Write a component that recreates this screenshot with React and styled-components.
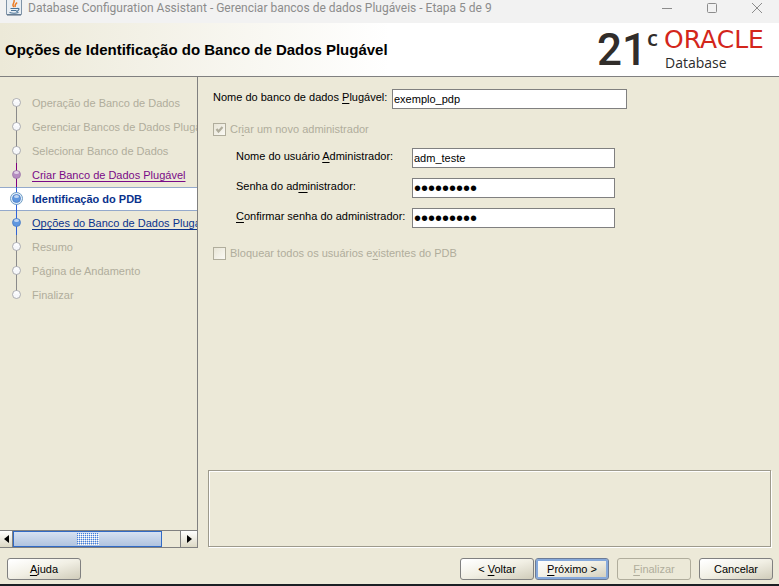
import React from "react";
import styled, { createGlobalStyle, css } from "styled-components";

const GlobalStyle = createGlobalStyle`
  *, *::before, *::after { box-sizing: border-box; }
  body {
    margin: 0;
    background: #ece9d8;
    color: #000;
    font: 11px/14px "Liberation Sans", Arial, sans-serif;
  }
  button, input { font: inherit; color: inherit; }
`;

const Window = styled.div`
  display: flex;
  flex-direction: column;
  min-height: 100vh;
  background: #ece9d8;
  border-bottom: 2px solid #1b1f24;
`;

const TitleBar = styled.div`
  display: flex;
  align-items: flex-start;
  height: 23px;
  padding-left: 6px;
  background: #f2f2f2;
  color: #8c8c8c;
`;

const WindowTitle = styled.span`
  flex: 1;
  padding-left: 6px;
  font: 12px/16px Roboto, "Noto Sans", sans-serif;
  white-space: nowrap;
`;

const WindowButton = styled.button`
  width: 45px;
  height: 16px;
  padding: 0;
  border: 0;
  background: none;
  svg { display: block; margin: 0 auto; }
`;

const Header = styled.header`
  display: flex;
  align-items: center;
  justify-content: space-between;
  height: 54px;
  padding: 0 11px 0 5px;
  border-bottom: 1px solid #808080;
  background: linear-gradient(to right, #ece9d8 0, #fff 50%);
`;

const PageTitle = styled.h1`
  margin: 0;
  font-size: 15px;
  line-height: 18px;
  font-weight: bold;
`;

const Brand = styled.div`
  display: flex;
  align-items: flex-start;
  gap: 6px;
  height: 46px;
`;

const Release = styled.span`
  display: flex;
  color: #312d2a;
  font: 500 44px/46px Roboto, sans-serif;
`;

const ReleaseSuffix = styled.sup`
  font: 600 22px/20px "Open Sans", sans-serif;
`;

const BrandNames = styled.span`
  display: flex;
  flex-direction: column;
  width: 104px;
`;

const Maker = styled.span`
  color: #d3261b;
  font: 25px/26px "DejaVu Sans", sans-serif;
`;

const Product = styled.span`
  padding-left: 1px;
  color: #2b2b2b;
  font: 14px/20px "Open Sans", sans-serif;
`;

const Body = styled.div`
  display: flex;
  flex: 1;
`;

const Sidebar = styled.nav`
  display: flex;
  flex-direction: column;
  flex: none;
  width: 198px;
  border-right: 1px solid #808080;
`;

const StepList = styled.ol`
  flex: 1;
  margin: 0;
  padding: 14px 0 0;
  list-style: none;
  overflow: hidden;
`;

const stepColors = { done: "#b0ad9c", visited: "#7a0a87", current: "#0a328c", next: "#0a328c", todo: "#b0ad9c" };

const Step = styled.li`
  display: flex;
  align-items: center;
  height: 24px;
  padding-left: 8px;
  color: ${(p) => stepColors[p.$state]};
  white-space: nowrap;
  ${(p) =>
    p.$state === "current" &&
    css`
      background: #fff;
      font-weight: bold;
      box-shadow: inset 0 1px #94a9cb, inset 0 -1px #94a9cb;
    `}
  svg { flex: none; margin-right: 8px; }
  a { color: inherit; text-underline-offset: 2px; }
`;

const ScrollBar = styled.div`
  display: flex;
  height: 18px;
  border: solid #808080;
  border-width: 1px 0;
`;

const ScrollArrow = styled.button`
  flex: none;
  width: ${(p) => p.$width}px;
  padding: 0;
  border: 0;
  border-${(p) => p.$side}: 1px solid #808080;
  background: linear-gradient(#fff, #dcd8c4);
  svg { display: block; margin: 0 auto; }
`;

const ScrollTrack = styled.div`
  flex: 1;
  padding-right: 18px;
`;

const ScrollThumb = styled.div`
  display: flex;
  align-items: center;
  justify-content: center;
  height: 16px;
  border: 1px solid #316ac5;
  background: linear-gradient(#d6e1f2, #b0c3df);
`;

const Main = styled.main`
  display: flex;
  flex: 1;
  flex-direction: column;
  min-width: 0;
  padding: 12px 8px 1px 10px;
`;

const Form = styled.form`
  flex: 1;
  padding-left: 5px;
`;

const NameField = styled.div`
  display: grid;
  grid-template-columns: 179px minmax(0, 235px);
`;

const AdminFields = styled.div`
  display: grid;
  grid-template-columns: 176px minmax(0, 203px);
  row-gap: 10px;
  padding: 9px 0 15px 23px;
`;

const FieldLabel = styled.label`
  padding-top: 1px;
  white-space: nowrap;
`;

const TextField = styled.input`
  width: 100%;
  min-width: 0;
  height: 20px;
  padding: 1px;
  border: 1px solid #808080;
  border-radius: 0;
  outline: 0;
  background: #fff;
  &[type="password"] { font-size: 20px; }
`;

const CheckRow = styled.div`
  display: flex;
  align-items: center;
  height: 20px;
  gap: 4px;
  color: #b0ad9c;
`;

const FirstCheckRow = styled(CheckRow)`
  margin-top: 10px;
`;

const CheckSlot = styled.span`
  display: grid;
  width: 13px;
  height: 13px;
  > * { grid-area: 1 / 1; }
`;

const CheckBox = styled.input`
  appearance: none;
  width: 13px;
  height: 13px;
  margin: 0;
  border: 1px solid #b0ad9c;
  background: linear-gradient(135deg, #e8e5d6, #faf9f4);
`;

const MessageBox = styled.section`
  height: 77px;
  border: 1px solid #9d9a8c;
  box-shadow: 1px 1px #fff, inset 1px 1px #fff;
`;

const Footer = styled.footer`
  display: flex;
  align-items: flex-start;
  justify-content: space-between;
  height: 36px;
  padding: 10px 6px 0 7px;
`;

const ButtonGroup = styled.div`
  display: flex;
  gap: 8px;
`;

const ButtonPair = styled.div`
  display: flex;
  gap: 1px;
`;

const Button = styled.button`
  width: 74px;
  height: 22px;
  padding: 0;
  border: 1px solid #808080;
  border-radius: 3px;
  background: linear-gradient(165deg, #fff 5%, #f1efe4 50%, #d0ccba);
  ${(p) =>
    p.$primary &&
    css`
      border-color: #6c7b96;
      box-shadow: inset 0 0 0 2px #86a9db;
    `}
  &:disabled {
    border-color: #b0ad9c;
    background: none;
    color: #b0ad9c;
  }
`;

const Key = styled.u`
  text-underline-offset: 2px;
`;

const steps = [
  ["Operação de Banco de Dados", "done"],
  ["Gerenciar Bancos de Dados Plugáveis", "done"],
  ["Selecionar Banco de Dados", "done"],
  ["Criar Banco de Dados Plugável", "visited"],
  ["Identificação do PDB", "current"],
  ["Opções do Banco de Dados Plugável", "next"],
  ["Resumo", "todo"],
  ["Página de Andamento", "todo"],
  ["Finalizar", "todo"],
];

const markerColors = {
  done: ["#f6f7fa", "#9a9ca2", "#8a8a8a"],
  todo: ["#f6f7fa", "#9a9ca2", "#8a8a8a"],
  visited: ["#b58cc0", "#9c78a8", "#800080"],
  current: ["#5f97e0", "#4b7cc4", "#2f62d9"],
  next: ["#5f97e0", "#4b7cc4", "#2f62d9"],
};

function StepMarker({ state, first, last }) {
  const [fill, edge, line] = markerColors[state];
  return (
    <svg width="16" height="24" viewBox="0 0 16 24" aria-hidden="true">
      {!first && <path d="M8.500 0V8" stroke={line} />}
      {!last && <path d="M8.500 15V24" stroke={line} />}
      {state === "current" && <circle cx="8.500" cy="11.500" r="6" fill="#e4f0fb" stroke="#6f9cc4" />}
      <circle cx="8.500" cy="11.500" r="4" fill={fill} stroke={edge} strokeWidth="0.800" />
      <ellipse cx="8.500" cy="9.500" rx="2.500" ry="1.500" fill="#fff" opacity="0.600" />
    </svg>
  );
}

function JavaIcon() {
  return (
    <svg width="16" height="16" viewBox="0 0 16 16" aria-hidden="true">
      <path d="M.5 0V14.500H15.500V0" fill="#e9eef3" stroke="#7f93a8" />
      <path d="M1 15H15" stroke="#51677f" />
      <path d="M8 7C5 5 9 3 8 0M9.500 7C8 5 10 4 11 2.500" fill="none" stroke="#ec7b22" strokeWidth="1.500" />
      <path d="M4.500 8.500H11M5 10.500H10.500M11 8.500Q14 8 12.500 10T10.500 11M3.500 12.500Q8 14 12.500 12.500" fill="none" stroke="#4a7396" strokeWidth="1.200" />
    </svg>
  );
}

function Grip() {
  return (
    <svg width="22" height="12" aria-hidden="true">
      <defs>
        <pattern id="grip" width="4" height="4" patternUnits="userSpaceOnUse">
          <path d="M0 0h1v1H0zM2 2h1v1H2zM2 0h1v1H2zM0 2h1v1H0z" fill="#3f7de0" />
          <path d="M1 1h1v1H1zM3 3h1v1H3zM3 1h1v1H3zM1 3h1v1H1z" fill="#fff" />
        </pattern>
      </defs>
      <rect width="22" height="12" fill="url(#grip)" />
    </svg>
  );
}

export default function App() {
  return (
    <>
      <GlobalStyle />
      <Window>
        <TitleBar>
          <JavaIcon />
          <WindowTitle>Database Configuration Assistant - Gerenciar bancos de dados Plugáveis - Etapa 5 de 9</WindowTitle>
          <WindowButton aria-label="Minimizar">
            <svg width="12" height="14"><path d="M1 7.500H11" stroke="#8c8c8c" /></svg>
          </WindowButton>
          <WindowButton aria-label="Maximizar">
            <svg width="12" height="14"><rect x="1.500" y="2.500" width="9" height="9" rx="1" fill="none" stroke="#8c8c8c" /></svg>
          </WindowButton>
          <WindowButton aria-label="Fechar">
            <svg width="12" height="14"><path d="M1 2L11 12M11 2L1 12" stroke="#8c8c8c" /></svg>
          </WindowButton>
        </TitleBar>
        <Header>
          <PageTitle>Opções de Identificação do Banco de Dados Plugável</PageTitle>
          <Brand>
            <Release>21<ReleaseSuffix>c</ReleaseSuffix></Release>
            <BrandNames>
              <Maker>ORACLE</Maker>
              <Product>Database</Product>
            </BrandNames>
          </Brand>
        </Header>
        <Body>
          <Sidebar aria-label="Etapas">
            <StepList>
              {steps.map(([name, state], i) => (
                <Step key={name} $state={state} aria-current={state === "current" ? "step" : undefined}>
                  <StepMarker state={state} first={i === 0} last={i === steps.length - 1} />
                  {state === "visited" || state === "next" ? <a href="#etapa">{name}</a> : <span>{name}</span>}
                </Step>
              ))}
            </StepList>
            <ScrollBar>
              <ScrollArrow type="button" aria-label="Rolar para a esquerda" $width={13} $side="right">
                <svg width="5" height="8"><path d="M5 0V8L0 4Z" /></svg>
              </ScrollArrow>
              <ScrollTrack>
                <ScrollThumb><Grip /></ScrollThumb>
              </ScrollTrack>
              <ScrollArrow type="button" aria-label="Rolar para a direita" $width={17} $side="left">
                <svg width="5" height="8"><path d="M0 0V8L5 4Z" /></svg>
              </ScrollArrow>
            </ScrollBar>
          </Sidebar>
          <Main>
            <Form>
              <NameField>
                <FieldLabel htmlFor="pdb">Nome do banco de dados <Key>P</Key>lugável:</FieldLabel>
                <TextField id="pdb" defaultValue="exemplo_pdp" />
              </NameField>
              <FirstCheckRow>
                <CheckSlot>
                  <CheckBox id="novo" type="checkbox" defaultChecked disabled />
                  <svg width="13" height="13" aria-hidden="true"><path d="M3.500 6L5.500 8.500L9.500 4" fill="none" stroke="#b0ad9c" strokeWidth="2.200" /></svg>
                </CheckSlot>
                <label htmlFor="novo">Cr<Key>i</Key>ar um novo administrador</label>
              </FirstCheckRow>
              <AdminFields>
                <FieldLabel htmlFor="usuario">Nome do usuário <Key>A</Key>dministrador:</FieldLabel>
                <TextField id="usuario" defaultValue="adm_teste" />
                <FieldLabel htmlFor="senha">Senha do ad<Key>m</Key>inistrador:</FieldLabel>
                <TextField id="senha" type="password" defaultValue="senha1234" />
                <FieldLabel htmlFor="confirma"><Key>C</Key>onfirmar senha do administrador:</FieldLabel>
                <TextField id="confirma" type="password" defaultValue="senha1234" />
              </AdminFields>
              <CheckRow>
                <CheckSlot><CheckBox id="bloquear" type="checkbox" disabled /></CheckSlot>
                <label htmlFor="bloquear">Bloquear todos os usuários e<Key>x</Key>istentes do PDB</label>
              </CheckRow>
            </Form>
            <MessageBox aria-label="Mensagens" />
          </Main>
        </Body>
        <Footer>
          <Button type="button"><Key>A</Key>juda</Button>
          <ButtonGroup>
            <ButtonPair>
              <Button type="button">&lt; <Key>V</Key>oltar</Button>
              <Button type="button" $primary><Key>P</Key>róximo &gt;</Button>
            </ButtonPair>
            <Button type="button" disabled><Key>F</Key>inalizar</Button>
            <Button type="button">Cancelar</Button>
          </ButtonGroup>
        </Footer>
      </Window>
    </>
  );
}
